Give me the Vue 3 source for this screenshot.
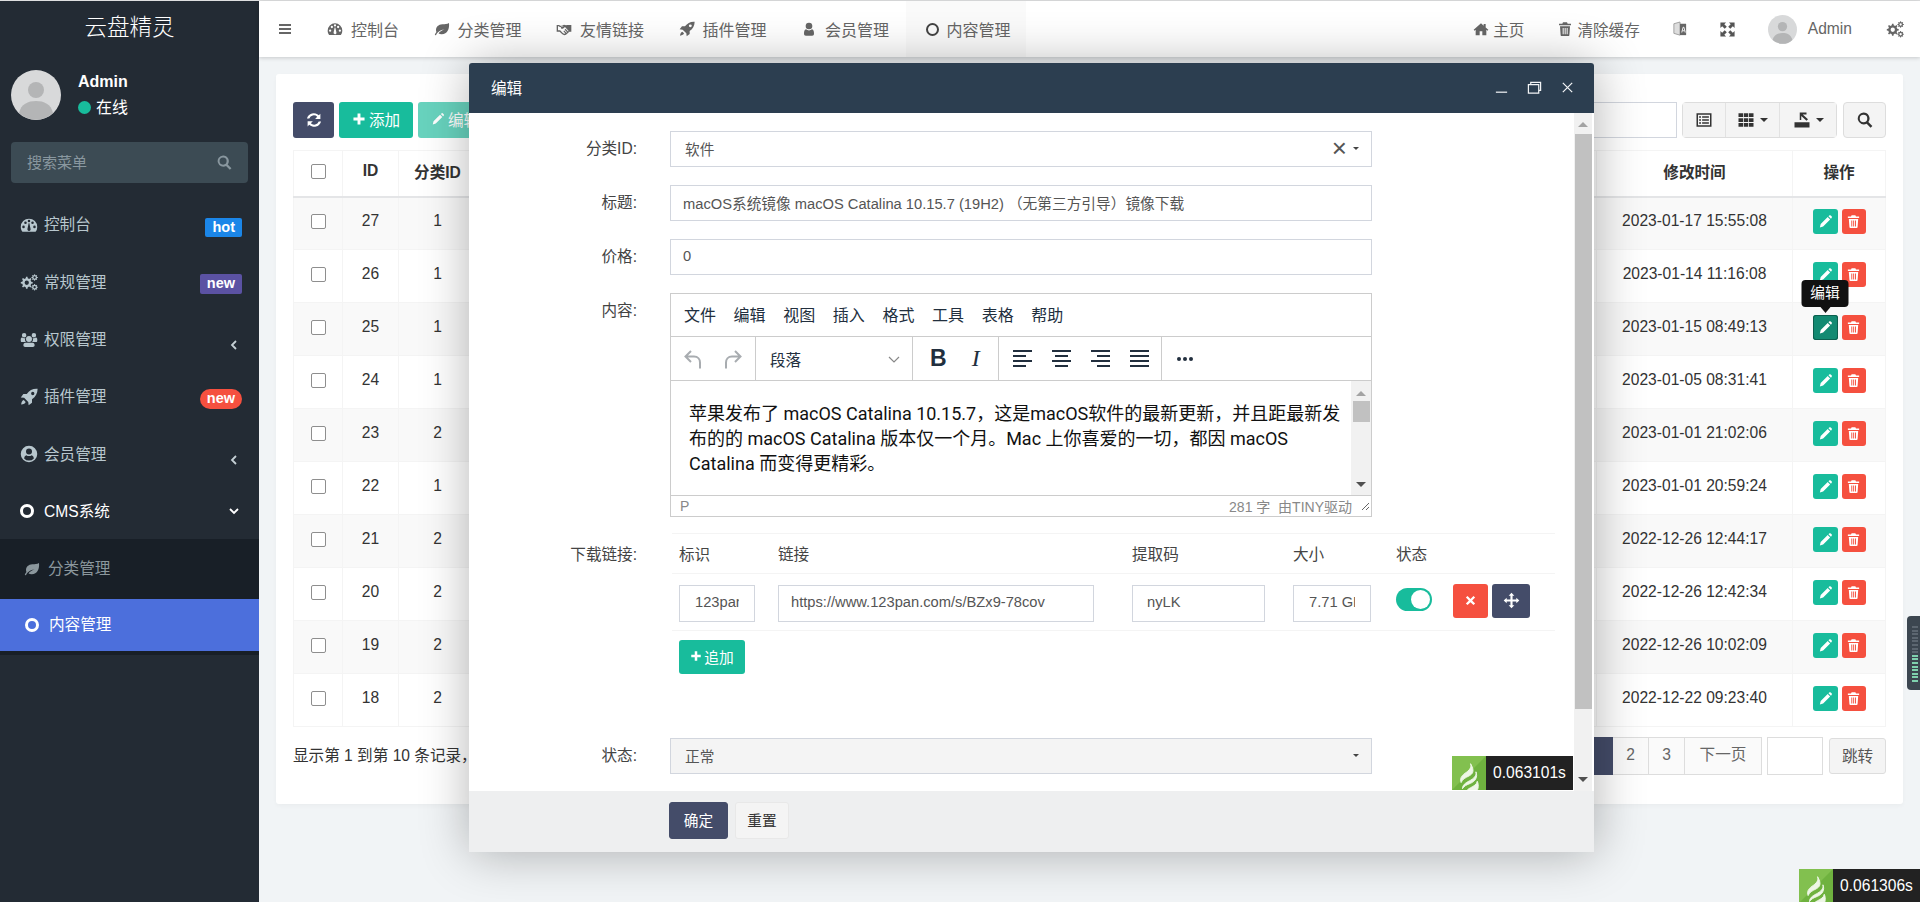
<script setup>
// generated outline of a gear, used for the settings icons
function gear(cx, cy, r, teeth) {
  const pts = []
  const step = (Math.PI * 2) / teeth
  for (let i = 0; i < teeth; i++) {
    const a = i * step
    const list = [[a - step * 0.28, r * 0.76], [a - step * 0.16, r], [a + step * 0.16, r], [a + step * 0.28, r * 0.76]]
    for (const [t, d] of list) pts.push(`${(cx + Math.cos(t) * d).toFixed(2)} ${(cy + Math.sin(t) * d).toFixed(2)}`)
  }
  const hole = r * 0.36
  return `M${pts.join('L')}zM${cx - hole} ${cy}a${hole} ${hole} 0 1 0 ${hole * 2} 0a${hole} ${hole} 0 1 0 ${-hole * 2} 0z`
}

const icons = {
  bars: 'M3 4.5h18v3H3zM3 10.5h18v3H3zM3 16.5h18v3H3z',
  gauge: 'M12 3.5A11 11 0 0 0 1 14.5c0 2.5.8 4.6 2.2 6.5h17.6a10.8 10.8 0 0 0 2.2-6.5 11 11 0 0 0-11-11zM4.7 16.2a1.7 1.7 0 1 1 0-3.4 1.7 1.7 0 0 1 0 3.4zm2.6-5.5a1.7 1.7 0 1 1 0-3.4 1.7 1.7 0 0 1 0 3.4zM12 8.4a1.7 1.7 0 1 1 0-3.4 1.7 1.7 0 0 1 0 3.4zm1.8 10.6a2.2 2.2 0 0 1-3.9-1.8l1.6-7.5h1l1.6 7.5c.1.6 0 1.3-.3 1.8zm2.9-8.3a1.7 1.7 0 1 1 0-3.4 1.7 1.7 0 0 1 0 3.4zm2.6 5.5a1.7 1.7 0 1 1 0-3.4 1.7 1.7 0 0 1 0 3.4z',
  leaf: 'M22.5 3c-3 2-6 1.600-10 1.900C6.500 5.400 3 9 3 13.500c0 1.100.2 2.100.6 3.100C2.400 18 1.500 19.600 1.200 21l1.800.5c.4-1.400 1.400-3 3-4.500 2.500-2.300 6-4 10-4.600-3.700 1.300-7 3.400-9.300 6.100 1.300 1 3 1.500 5 1.400C20 19.600 23.500 12 22.500 3z',
  rocket: 'M23 1c-6-.3-10.500 2-14 7H4.500L1 12.500l4.500.5L11 18.500l.5 4.500 4.500-3.500V15c5-3.500 7.300-8 7.500-14zM17 9.500a2.200 2.200 0 1 1 0-4.400 2.200 2.200 0 0 1 0 4.400zM5 16c-2 .5-3 2.500-3.500 6 3.500-.5 5.500-1.500 6-3.500z',
  user: 'M12 2.500a5 5 0 1 1 0 10 5 5 0 0 1 0-10zM7.500 12.500c1.200 1 2.800 1.600 4.500 1.600s3.300-.6 4.500-1.600c2.300.5 3 3.500 3 6.500 0 1.800-1 3-2.800 3H7.300c-1.800 0-2.800-1.200-2.800-3 0-3 .7-6 3-6.500z',
  userCircle: 'M12 1a11 11 0 1 0 0 22 11 11 0 0 0 0-22zm0 3.600a4 4 0 1 1 0 8 4 4 0 0 1 0-8zm0 16.200a8.800 8.800 0 0 1-6.500-2.900c.4-2.100 1.300-4 3-4.300 1 .8 2.200 1.200 3.500 1.200s2.500-.4 3.500-1.200c1.700.3 2.600 2.200 3 4.300a8.800 8.800 0 0 1-6.500 2.900z',
  users: 'M12 8a4 4 0 1 1 0 8 4 4 0 0 1 0-8zM5.500 4a3 3 0 1 1 0 6 3 3 0 0 1 0-6zm13 0a3 3 0 1 1 0 6 3 3 0 0 1 0-6zM1 12c0-1.200 1-2 2-2 .7.600 1.500 1 2.500 1 .6 0 1.200-.1 1.600-.4a5 5 0 0 0 .7 5.400H2.500C1.500 16 1 15.300 1 14.200zm22 0v2.200c0 1.100-.5 1.800-1.500 1.800h-5.300a5 5 0 0 0 .7-5.400c.4.300 1 .4 1.600.4 1 0 1.800-.4 2.500-1 1 0 2 .8 2 2zM7 17h10c1.500 0 2.500 1.200 2.500 3.200 0 1.500-1 2.300-2.300 2.300H6.800c-1.300 0-2.300-.8-2.300-2.300C4.500 18.200 5.500 17 7 17z',
  home: 'M12 3.500 1 13.200l1.200 1.300L4 13v8.500h6V15.500h4v6h6V13l1.800 1.500 1.200-1.300-4-3.500V4.500h-3V7z',
  trash: 'M9 2h6l1 2h5v2.500H3V4h5zM4.500 8h15l-1 13.200c-.1.800-.7 1.300-1.500 1.300H7c-.8 0-1.400-.5-1.500-1.300zM8.500 10.500v9.500h1.500v-9.500zm3 0v9.500H13v-9.500zm3 0v9.500H16v-9.500z',
  expand: 'M2 2h8L7.500 4.500 11 8 8 11 4.500 7.500 2 10zM22 2v8l-2.500-2.500L16 11l-3-3 3.500-3.500L14 2zM2 22v-8l2.500 2.500L8 13l3 3-3.500 3.500L10 22zM22 22h-8l2.500-2.500L13 16l3-3 3.500 3.500L22 14z',
  pencil: 'M3 21.500 4.300 16 15.500 4.800l3.900 3.900L8.200 19.900zM16.800 3.500l1-1a1.900 1.900 0 0 1 2.700 0l1.200 1.200a1.900 1.900 0 0 1 0 2.700l-1 1z',
  plus: 'M9.500 2.500h5v7h7v5h-7v7h-5v-7h-7v-5h7z',
  times: 'M6.500 3.500 12 9l5.500-5.500 3 3L15 12l5.500 5.500-3 3L12 15l-5.500 5.500-3-3L9 12 3.500 6.500z',
  search: 'M10 2a8 8 0 0 1 6.500 12.700l5.300 5.300-2.300 2.300-5.300-5.300A8 8 0 1 1 10 2zm0 3a5 5 0 1 0 0 10 5 5 0 0 0 0-10z',
  move: 'M12 1l4 4.200h-2.500v5.300h5.300V8L23 12l-4.200 4v-2.500h-5.300v5.300H16L12 23l-4-4.200h2.500v-5.300H5.200V16L1 12l4.200-4v2.500h5.300V5.200H8z',
  refresh: 'M20.500 3.500v7h-7l2.800-2.800A6.500 6.500 0 0 0 5.700 10H2.600A9.500 9.500 0 0 1 18.400 5.600zM3.500 20.500v-7h7l-2.800 2.800A6.500 6.500 0 0 0 18.300 14h3.100A9.500 9.500 0 0 1 5.600 18.400z',
  listAlt: 'M2 3h20v18H2zm2 2v14h16V5zm1.500 2h2.500v2H5.500zm4 0h9v2h-9zm-4 4h2.500v2H5.500zm4 0h9v2h-9zm-4 4h2.500v2H5.500zm4 0h9v2h-9z',
  th: 'M2 3h6v5H2zM9 3h6v5H9zM16 3h6v5h-6zM2 9.500h6v5H2zM9 9.500h6v5H9zM16 9.500h6v5h-6zM2 16h6v5H2zM9 16h6v5H9zM16 16h6v5h-6z',
  exportIcon: 'M2 15h20v7H2zM9 2h9v2.500h-5L20 11l-2 2-7-6.500V12H9z',
  flame: 'M13 2c1 3-1 5-4 7-3 2.200-4 4-3 7 1-2.500 3-3.500 6-5 3-1.600 4-4 1-9zM17 8c.5 3-1.500 5-5 6.800-3 1.500-5 3.200-5 5.700 1.200-2 3-2.800 6-4 3.500-1.500 5.500-4.500 4-8.500zM18 15c-.5 2.500-2.500 3.500-5 4.800-2 1-3.200 2-3.700 4.200h7.200c2-2.200 3-5.500 1.500-9z',
  handshake: 'M1 6h4l1 1h3l3-1.500 3 1 2-.5h6v10h-3l-5 4.500-2.500 1-3-1.500-4-4H1zm2 2v6h3.200l4.300 4.300 2 1 1.600-.6-3-3.200 1.200-1.200 3.300 3.400 1-.9-3.600-3.800 1.200-1.200 3.800 4 1-.9-5.500-6-2.700 2.200c-1 .8-2.300.8-3 0-.8-.8-.7-2 .2-2.800L12 8.400 9.500 9H5.300L4.500 8z'
}
const gears = gear(9, 13, 8, 8) + gear(19.500, 6, 4.300, 8) + gear(19.500, 19, 4.300, 8)

const nav = [
  { text: '控制台', icon: 'gauge', badge: 'hot', cls: 'is-hot' },
  { text: '常规管理', icon: 'gears', badge: 'new', cls: 'is-new' },
  { text: '权限管理', icon: 'users', arrow: true },
  { text: '插件管理', icon: 'rocket', badge: 'new', cls: 'is-pill' },
  { text: '会员管理', icon: 'userCircle', arrow: true }
]

const topLinks = [
  { text: '控制台', icon: 'gauge' },
  { text: '分类管理', icon: 'leaf' },
  { text: '友情链接', icon: 'handshake' },
  { text: '插件管理', icon: 'rocket' },
  { text: '会员管理', icon: 'user' }
]

const rows = [
  { id: 27, cat: 1, time: '2023-01-17 15:55:08' },
  { id: 26, cat: 1, time: '2023-01-14 11:16:08' },
  { id: 25, cat: 1, time: '2023-01-15 08:49:13', hover: true },
  { id: 24, cat: 1, time: '2023-01-05 08:31:41' },
  { id: 23, cat: 2, time: '2023-01-01 21:02:06' },
  { id: 22, cat: 1, time: '2023-01-01 20:59:24' },
  { id: 21, cat: 2, time: '2022-12-26 12:44:17' },
  { id: 20, cat: 2, time: '2022-12-26 12:42:34' },
  { id: 19, cat: 2, time: '2022-12-26 10:02:09' },
  { id: 18, cat: 2, time: '2022-12-22 09:23:40' }
]

const menus = ['文件', '编辑', '视图', '插入', '格式', '工具', '表格', '帮助']
</script>

<template>
  <div class="page">
    <aside class="sidebar">
      <div class="logo">云盘精灵</div>
      <div class="user-panel">
        <svg class="avatar" viewBox="0 0 50 50">
          <circle cx="25" cy="25" r="25" fill="#d8d9da" />
          <circle cx="25" cy="20" r="8" fill="#b4b5b6" />
          <path d="M8 43c2-9 9-12 17-12s15 3 17 12a25 25 0 0 1-34 0z" fill="#b4b5b6" />
        </svg>
        <div class="user-info">
          <div class="user-name">Admin</div>
          <div class="user-state"><i class="dot"></i>在线</div>
        </div>
      </div>
      <div class="side-search">
        <span>搜索菜单</span>
        <svg viewBox="0 0 24 24"><path fill-rule="evenodd" :d="icons.search" /></svg>
      </div>
      <ul class="nav">
        <li v-for="item in nav" :key="item.text" class="nav-item">
          <svg class="nav-icon" viewBox="0 0 24 24"><path fill-rule="evenodd" :d="item.icon === 'gears' ? gears : icons[item.icon]" /></svg>
          <span class="nav-text">{{ item.text }}</span>
          <span v-if="item.badge" class="nav-badge" :class="item.cls">{{ item.badge }}</span>
          <svg v-if="item.arrow" class="chev" viewBox="0 0 12 12"><path d="M8 2 4 6l4 4" /></svg>
        </li>
        <li class="nav-item is-open">
          <i class="ring"></i>
          <span class="nav-text">CMS系统</span>
          <svg class="chev" viewBox="0 0 12 12"><path d="M2 4l4 4 4-4" /></svg>
        </li>
        <li class="sub-wrap">
          <div class="sub-item">
            <svg class="nav-icon" viewBox="0 0 24 24"><path :d="icons.leaf" /></svg>
            <span>分类管理</span>
          </div>
          <div class="sub-item is-active">
            <i class="ring"></i>
            <span>内容管理</span>
          </div>
        </li>
      </ul>
    </aside>

    <div class="main">
      <header class="topbar">
        <svg class="top-bars" viewBox="0 0 24 24"><path :d="icons.bars" /></svg>
        <a v-for="link in topLinks" :key="link.text" class="top-link">
          <svg viewBox="0 0 24 24"><path fill-rule="evenodd" :d="icons[link.icon]" /></svg>{{ link.text }}
        </a>
        <a class="top-link is-active"><i class="ring"></i>内容管理</a>
        <div class="top-right">
          <a class="top-link"><svg viewBox="0 0 24 24"><path :d="icons.home" /></svg>主页</a>
          <a class="top-link"><svg viewBox="0 0 24 24"><path fill-rule="evenodd" :d="icons.trash" /></svg>清除缓存</a>
          <svg class="lang" viewBox="0 0 16 18">
            <path d="M1 3l7-2v15l-7-2z" fill="#ddd" stroke="#999" />
            <path d="M8 3h7v13H8z" fill="#666" />
            <path d="M10 13l1.500-6h1l1.500 6M10.800 11h2.400" stroke="#fff" fill="none" />
          </svg>
          <svg class="top-expand" viewBox="0 0 24 24"><path :d="icons.expand" /></svg>
          <svg class="top-avatar" viewBox="0 0 50 50">
            <circle cx="25" cy="25" r="25" fill="#d8d9da" />
            <circle cx="25" cy="20" r="8" fill="#b4b5b6" />
            <path d="M8 43c2-9 9-12 17-12s15 3 17 12a25 25 0 0 1-34 0z" fill="#b4b5b6" />
          </svg>
          <span class="top-admin">Admin</span>
          <svg class="top-gears" viewBox="0 0 24 24"><path fill-rule="evenodd" :d="gears" /></svg>
        </div>
      </header>

      <section class="content">
        <div class="panel">
          <div class="toolbar">
            <button class="btn btn-dark btn-refresh"><svg viewBox="0 0 24 24"><path :d="icons.refresh" /></svg></button>
            <button class="btn btn-green"><svg viewBox="0 0 24 24"><path :d="icons.plus" /></svg>添加</button>
            <button class="btn btn-green is-off"><svg viewBox="0 0 24 24"><path :d="icons.pencil" /></svg>编辑</button>
            <div class="tool-right">
              <input class="table-search" />
              <div class="btn-group">
                <button class="tool-btn w43"><svg viewBox="0 0 24 24"><path fill-rule="evenodd" :d="icons.listAlt" /></svg></button>
                <button class="tool-btn w54"><svg viewBox="0 0 24 24"><path :d="icons.th" /></svg><i class="caret"></i></button>
                <button class="tool-btn w56"><svg viewBox="0 0 24 24"><path :d="icons.exportIcon" /></svg><i class="caret"></i></button>
              </div>
              <button class="tool-btn tool-single"><svg viewBox="0 0 24 24"><path fill-rule="evenodd" :d="icons.search" /></svg></button>
            </div>
          </div>

          <table class="grid">
            <colgroup>
              <col style="width: 49px" /><col style="width: 56px" /><col style="width: 78px" /><col />
              <col style="width: 196px" /><col style="width: 93px" />
            </colgroup>
            <thead>
              <tr>
                <th><i class="check"></i></th>
                <th>ID</th>
                <th>分类ID</th>
                <th></th>
                <th>修改时间</th>
                <th>操作</th>
              </tr>
            </thead>
            <tbody>
              <tr v-for="row in rows" :key="row.id">
                <td><i class="check"></i></td>
                <td>{{ row.id }}</td>
                <td>{{ row.cat }}</td>
                <td></td>
                <td>{{ row.time }}</td>
                <td class="ops">
                  <button class="op op-edit" :class="{ 'is-hover': row.hover }">
                    <svg viewBox="0 0 24 24"><path :d="icons.pencil" /></svg>
                    <span v-if="row.hover" class="tip">编辑</span>
                  </button>
                  <button class="op op-del"><svg viewBox="0 0 24 24"><path fill-rule="evenodd" :d="icons.trash" /></svg></button>
                </td>
              </tr>
            </tbody>
          </table>

          <div class="pager-row">
            <span class="pager-info">显示第 1 到第 10 条记录，</span>
            <div class="pager">
              <a class="page-cell is-current">1</a>
              <a class="page-cell w36">2</a>
              <a class="page-cell w36">3</a>
              <a class="page-cell w77">下一页</a>
              <input class="page-jump" />
              <button class="page-go">跳转</button>
            </div>
          </div>
        </div>
      </section>
    </div>

    <div class="modal">
      <div class="modal-head">
        <span>编辑</span>
        <div class="modal-ctrl">
          <svg viewBox="0 0 16 16"><path d="M2 13h12" /></svg>
          <svg viewBox="0 0 16 16"><path d="M1.500 5h11v9h-11zM4 5V2.500h10.500V11h-2" /></svg>
          <svg viewBox="0 0 16 16"><path d="M3 3l10 10M13 3 3 13" /></svg>
        </div>
      </div>

      <div class="modal-body">
        <form class="form" @submit.prevent>
          <div class="form-row">
            <label>分类ID:</label>
            <div class="select">
              <span>软件</span>
              <b class="select-x">×</b>
              <i class="caret"></i>
            </div>
          </div>
          <div class="form-row">
            <label>标题:</label>
            <input class="field" value="macOS系统镜像 macOS Catalina 10.15.7 (19H2) （无第三方引导）镜像下载" />
          </div>
          <div class="form-row">
            <label>价格:</label>
            <input class="field" value="0" />
          </div>
          <div class="form-row row-editor">
            <label>内容:</label>
            <div class="editor">
              <div class="ed-menu"><span v-for="m in menus" :key="m">{{ m }}</span></div>
              <div class="ed-tools">
                <div class="ed-group g-undo">
                  <svg viewBox="0 0 20 24"><path d="M8 4 2.500 9.500 8 15M3 9.500h8c4 0 6 3 6 6v6" /></svg>
                  <svg viewBox="0 0 20 24"><path d="M12 4l5.500 5.500L12 15M17 9.500H9c-4 0-6 3-6 6v6" /></svg>
                </div>
                <div class="ed-group g-format">
                  <span>段落</span>
                  <svg viewBox="0 0 12 12"><path d="M1 4l5 5 5-5" /></svg>
                </div>
                <div class="ed-group g-style"><b>B</b><em>I</em></div>
                <div class="ed-group g-align">
                  <i class="al al-left"><u></u><u></u><u></u><u></u></i>
                  <i class="al al-center"><u></u><u></u><u></u><u></u></i>
                  <i class="al al-right"><u></u><u></u><u></u><u></u></i>
                  <i class="al al-full"><u></u><u></u><u></u><u></u></i>
                </div>
                <div class="ed-group g-more"><i></i><i></i><i></i></div>
              </div>
              <div class="ed-content">
                <p>苹果发布了 macOS Catalina 10.15.7，这是macOS软件的最新更新，并且距最新发<br />布的的 macOS Catalina 版本仅一个月。Mac 上你喜爱的一切，都因 macOS<br />Catalina 而变得更精彩。</p>
                <div class="ed-scroll">
                  <i class="arrow-up"></i>
                  <div class="ed-thumb"></div>
                  <i class="arrow-down"></i>
                </div>
              </div>
              <div class="ed-status">
                <span>P</span>
                <span class="ed-count">281 字 &nbsp;由TINY驱动</span>
                <svg viewBox="0 0 10 10"><path d="M9 2 2 9M9 6 6 9" /></svg>
              </div>
            </div>
          </div>

          <div class="links">
            <label>下载链接:</label>
            <div class="links-table">
              <div class="links-head">
                <span>标识</span><span>链接</span><span>提取码</span><span>大小</span><span>状态</span><span></span>
              </div>
              <div class="links-row">
                <input class="field w76" value="123pan" />
                <input class="field w316" value="https://www.123pan.com/s/BZx9-78cov" />
                <input class="field w133" value="nyLK" />
                <input class="field w78" value="7.71 GB" />
                <span class="toggle"></span>
                <span class="link-ops">
                  <button class="link-btn is-red"><svg viewBox="0 0 24 24"><path :d="icons.times" /></svg></button>
                  <button class="link-btn is-dark"><svg viewBox="0 0 24 24"><path :d="icons.move" /></svg></button>
                </span>
              </div>
              <button class="btn btn-green add-link"><svg viewBox="0 0 24 24"><path :d="icons.plus" /></svg>追加</button>
            </div>
          </div>

          <div class="form-row row-state">
            <label>状态:</label>
            <div class="select is-gray">
              <span>正常</span>
              <i class="caret"></i>
            </div>
          </div>
        </form>

        <div class="scrollbar">
          <i class="arrow-up"></i>
          <div class="thumb"></div>
          <i class="arrow-down"></i>
        </div>
      </div>

      <div class="modal-foot">
        <button class="foot-btn is-ok">确定</button>
        <button class="foot-btn">重置</button>
      </div>

      <div class="trace in-modal">
        <svg viewBox="0 0 34 34"><rect width="34" height="34" fill="#6fb23f" /><path d="M0 0h34L0 34z" fill="#82c04f" /><path :d="icons.flame" fill="#eef6e6" stroke="#eef6e6" stroke-width=".7" transform="translate(1 5) scale(1.35)" /></svg>
        <span>0.063101s</span>
      </div>
    </div>

    <div class="trace in-page">
      <svg viewBox="0 0 34 34"><rect width="34" height="34" fill="#6fb23f" /><path d="M0 0h34L0 34z" fill="#82c04f" /><path :d="icons.flame" fill="#eef6e6" stroke="#eef6e6" stroke-width=".7" transform="translate(1 5) scale(1.35)" /></svg>
      <span>0.061306s</span>
    </div>

    <div class="side-widget"><i v-for="n in 16" :key="n" :class="{ lit: n > 8 }"></i></div>
  </div>
</template>

<style>
html, body { margin: 0; background: #f1f4f6; }
</style>

<style scoped>
.page {
  position: relative; width: 1920px; height: 902px; overflow: hidden;
  padding-top: 1px; box-sizing: border-box;
  background: #dedfe0;
  display: flex;
  font-family: "Liberation Sans", "Noto Sans CJK SC", sans-serif;
  font-size: 15.6px; color: #333;
}
svg { fill: currentColor; display: block; flex-shrink: 0; }
button { font-family: inherit; padding: 0; border: 0; cursor: pointer; }
input { font-family: inherit; outline: 0; box-sizing: border-box; }
i { display: block; }

/* Sidebar */
.sidebar { width: 259px; flex-shrink: 0; background: #232b34; color: #b8c7ce; }
.logo { height: 56px; line-height: 54px; text-align: center; font-size: 22.5px; color: #fff; font-weight: 300; }
.user-panel { display: flex; align-items: center; gap: 17px; padding: 12px 11px 0; height: 51px; }
.avatar { width: 50px; height: 50px; }
.user-name { font-weight: 700; color: #fff; font-size: 16px; line-height: 26px; }
.user-state { display: flex; align-items: center; gap: 5px; color: #fff; font-size: 16px; line-height: 26px; }
.dot { width: 13px; height: 13px; border-radius: 50%; background: #18bc9c; }
.side-search {
  margin: 22px 11px 0; height: 41px; border-radius: 4px; background: #3c4b54;
  display: flex; align-items: center; justify-content: space-between; padding: 0 15px 0 16px;
  color: #89979f; font-size: 15px;
}
.side-search span { padding-bottom: 3px; }
.side-search svg { width: 17px; height: 17px; }
.nav { list-style: none; margin: 13px 0 0; padding: 0; }
.nav-item { position: relative; height: 57.4px; display: flex; align-items: center; padding-left: 20px; font-size: 15.6px; }
.nav-icon { width: 18px; height: 18px; margin-right: 6px; }
.nav-text { padding-bottom: 3px; }
.nav-badge { position: absolute; right: 17px; top: 22px; padding: 0 7px; height: 19px; line-height: 18px; font-size: 14.5px; font-weight: 700; color: #fff; border-radius: 2px; }
.is-hot { background: #1b86e8; }
.is-new { background: #5b52a3; top: 21px; height: 20px; }
.is-pill { background: #f5503f; border-radius: 10px; top: 21px; height: 20px; }
.chev { position: absolute; right: 19px; top: 28px; width: 12px; height: 12px; fill: none; stroke: #c5d0d5; stroke-width: 1.8; }
.is-open { color: #fff; height: 57px; }
.is-open .ring { margin-right: 10px; }
.is-open .chev { stroke: #fff; top: 22px; }
.ring { width: 14px; height: 14px; border: 3px solid currentColor; border-radius: 50%; box-sizing: border-box; flex-shrink: 0; }
.sub-wrap { background: #181f27; padding-bottom: 4px; margin-top: -1px; }
.sub-item { height: 60px; display: flex; align-items: center; padding-left: 24px; color: #8b979d; }
.sub-item span { padding-bottom: 4px; }
.sub-item .nav-icon { width: 16px; height: 16px; margin-right: 8px; }
.sub-item.is-active { height: 52px; background: #4c6fdc; color: #fff; padding-left: 25px; }
.sub-item .ring { width: 14px; height: 14px; margin-right: 10px; }

/* Top bar */
.main { flex: 1; min-width: 0; display: flex; flex-direction: column; background: #f1f4f6; }
.topbar {
  height: 56px; flex-shrink: 0; background: #fff; display: flex; align-items: center;
  padding-left: 18px; color: #666; font-size: 16px;
  box-shadow: 0 1px 4px rgba(0, 0, 0, .18); position: relative;
}
.top-bars { width: 16px; height: 16px; margin-right: 34px; }
.top-link { display: flex; align-items: center; gap: 8px; margin-right: 34.5px; }
.top-link svg { width: 16px; height: 16px; }
.topbar > .top-link.is-active { background: #fafafa; height: 56px; margin: 0 0 0 -18px; padding: 0 15px 0 20px; gap: 8px; }
.topbar > .top-link .ring { border-width: 2px; width: 13px; height: 13px; color: #444; }
.top-right { margin-left: auto; display: flex; align-items: center; padding-right: 16px; font-size: 15.6px; }
.top-right .top-link { margin-right: 33px; gap: 4px; }
.top-right .top-link svg { width: 16px; height: 16px; }
.lang { width: 14px; height: 16px; margin-right: 32px; }
.top-expand { width: 17px; height: 17px; margin-right: 32px; color: #555; }
.top-avatar { width: 29px; height: 29px; margin-right: 11px; }
.top-admin { margin-right: 34px; font-size: 15.6px; }
.top-gears { width: 18px; height: 18px; color: #666; }

/* Panel and table */
.content { padding: 17px; flex: 1; min-height: 0; }
.panel {
  background: #fff; border-radius: 3px; padding: 28px 17px 0; height: 730px; box-sizing: border-box;
  box-shadow: 0 2px 4px rgba(0, 0, 0, .03);
}
.toolbar { display: flex; align-items: center; gap: 5px; height: 36px; margin-bottom: 12px; }
.btn {
  height: 36px; border-radius: 3px; color: #fff; display: inline-flex; align-items: center; justify-content: center; gap: 3px;
  font-size: 15.6px; padding-bottom: 2px; box-sizing: border-box;
}
.btn svg { width: 14px; height: 14px; }
.btn-dark { background: #444c69; width: 41px; padding: 0; }
.btn-refresh svg { width: 18px; height: 18px; }
.btn-green { background: #18bc9c; width: 74px; }
.is-off { opacity: .65; }
.tool-right { margin-left: auto; display: flex; align-items: center; }
.table-search { width: 180px; height: 36px; border: 1px solid #d2d6de; margin-right: 5px; }
.btn-group { display: flex; border: 1px solid #ddd; border-radius: 4px; background: #f4f4f4; margin-right: 6px; }
.tool-btn {
  height: 34px; background: #f4f4f4; color: #333; display: flex; align-items: center; justify-content: center; gap: 5px;
}
.tool-btn svg { width: 18px; height: 18px; }
.w43 { width: 43px; border-right: 1px solid #e2e2e2; }
.w54 { width: 54px; border-right: 1px solid #e2e2e2; }
.w56 { width: 56px; }
.tool-single { width: 43px; height: 36px; border: 1px solid #ddd; border-radius: 4px; }
.caret { width: 0; height: 0; border: 4px solid transparent; border-top-color: currentColor; border-bottom: 0; }

.grid { width: 100%; table-layout: fixed; border-collapse: collapse; border: 1px solid #f4f4f4; }
.grid th { height: 46px; font-size: 15.6px; font-weight: 700; color: #333; text-align: center; border-bottom: 2px solid #e4e5e7; border-right: 1px solid #f4f4f4; padding: 0 0 4px; box-sizing: border-box; }
.grid td { height: 53px; text-align: center; padding: 0 0 4px; border-right: 1px solid #f4f4f4; border-bottom: 1px solid #f4f4f4; box-sizing: border-box; color: #333; }
.grid tbody tr:nth-child(odd) { background: #f9f9f9; }
.check { width: 13px; height: 13px; border: 1px solid #8e8e8e; border-radius: 2px; background: #fff; margin: 0 auto; }
.ops { position: relative; font-size: 0; }
.op { position: relative; width: 25px; height: 25px; border-radius: 3px; color: #fff; display: inline-flex; align-items: center; justify-content: center; vertical-align: middle; }
.op svg { width: 15px; height: 15px; }
.op-edit { background: #18bc9c; margin-right: 4px; }
.op-del { background: #f5503f; width: 24px; }
.op-edit.is-hover { background: #138a72; box-shadow: inset 0 0 0 1px #0c5f4e; }
.tip {
  position: absolute; left: 50%; bottom: 33px; transform: translateX(-50%);
  background: #111; color: #fff; font-size: 14.7px; line-height: 27px; width: 47px; border-radius: 4px;
}
.tip::after { content: ""; position: absolute; left: 50%; top: 100%; margin-left: -5px; border: 6px solid transparent; border-left-width: 5px; border-right-width: 5px; border-top-color: #111; border-bottom: 0; }

.pager-row { display: flex; justify-content: space-between; align-items: center; margin-top: 10px; height: 38px; }
.pager-info { padding-bottom: 5px; }
.pager { display: flex; align-items: center; }
.page-cell { height: 38px; line-height: 34px; box-sizing: border-box; border: 1px solid #ddd; border-left: 0; text-align: center; color: #666; background: #fafafa; }
.page-cell.is-current { width: 50px; background: #444c69; color: #fff; border-color: #444c69; }
.w36 { width: 36px; }
.w77 { width: 77px; }
.page-jump { width: 56px; height: 38px; border: 1px solid #ddd; margin: 0 6px 0 5px; }
.page-go { width: 57px; height: 36px; border: 1px solid #ddd; border-radius: 3px; background: #f4f4f4; color: #555; font-size: 15.6px; padding-bottom: 3px; }

/* Modal window */
.modal {
  position: absolute; left: 469px; top: 63px; width: 1125px; height: 789px;
  display: flex; flex-direction: column; background: #fff; border-radius: 3px 3px 0 0;
  box-shadow: 1px 1px 50px rgba(0, 0, 0, .3);
}
.modal-head {
  height: 50px; flex-shrink: 0; background: #2c3e50; color: #fff; border-radius: 3px 3px 0 0;
  display: flex; align-items: center; justify-content: space-between; padding: 0 19px 2px 22px; font-size: 15.6px; box-sizing: border-box;
}
.modal-ctrl { display: flex; gap: 18px; }
.modal-ctrl svg { width: 15px; height: 15px; fill: none; stroke: #f2f4f6; stroke-width: 1.3; }
.modal-body { flex: 1; min-height: 0; display: flex; overflow: hidden; padding-right: 2px; }
.form { flex: 1; min-width: 0; padding-top: 18px; font-size: 14.7px; color: #555; }
.form-row { display: flex; margin-bottom: 18px; }
.form-row label { width: 168px; text-align: right; margin-right: 33px; line-height: 36px; color: #444; flex-shrink: 0; font-size: 15.6px; }
.field { height: 36px; border: 1px solid #d2d6de; padding: 0 12px 2px; font-size: 14.7px; color: #555; background: #fff; }
.form-row > .field { width: 702px; }
.select { width: 702px; height: 36px; box-sizing: border-box; border: 1px solid #d2d6de; display: flex; align-items: center; padding: 0 12px 2px 14px; color: #555; }
.select span { flex: 1; }
.select-x { font-weight: 400; font-size: 26px; color: #555; margin-right: 6px; line-height: 1; }
.select .caret { border-width: 3.5px; color: #444; border-bottom: 0; }
.is-gray { background: #f4f4f4; }
.row-editor { margin-bottom: 16px; }
.row-editor label { line-height: 36px; }

.editor { width: 702px; height: 224px; box-sizing: border-box; border: 1px solid #ccc; display: flex; flex-direction: column; color: #222f3e; }
.ed-menu { height: 43px; flex-shrink: 0; display: flex; align-items: center; gap: 17.6px; padding: 0 0 2px 13px; font-size: 16px; border-bottom: 1px solid #ccc; box-sizing: border-box; }
.ed-tools { height: 44px; flex-shrink: 0; display: flex; border-bottom: 1px solid #ccc; box-sizing: border-box; }
.ed-group { display: flex; align-items: center; border-right: 1px solid #ccc; }
.g-undo { width: 85px; padding-left: 12px; box-sizing: border-box; gap: 20px; }
.g-undo svg { width: 20px; height: 24px; fill: none; stroke: #a8acb0; stroke-width: 2; }
.g-format { width: 157px; padding: 0 12px 0 14px; box-sizing: border-box; justify-content: space-between; font-size: 15.6px; }
.g-format svg { width: 12px; height: 12px; fill: none; stroke: #888; stroke-width: 1.2; }
.g-style { width: 86px; box-sizing: border-box; padding-left: 17px; gap: 25px; font-size: 23px; }
.g-style b { font-family: "Liberation Sans", sans-serif; }
.g-style em { font-family: "Liberation Serif", serif; font-size: 24px; }
.g-align { width: 163px; box-sizing: border-box; padding-left: 14px; gap: 20px; }
.al { width: 19px; display: flex; flex-direction: column; gap: 3px; }
.al u { display: block; height: 2px; background: #222f3e; width: 100%; }
.al-left u:nth-child(even) { width: 70%; }
.al-center { align-items: center; }
.al-center u:nth-child(even) { width: 70%; }
.al-right { align-items: flex-end; }
.al-right u:nth-child(even) { width: 70%; }
.g-more { border: 0; padding-left: 15px; gap: 2px; }
.g-more i { width: 4px; height: 4px; border-radius: 50%; background: #222f3e; }
.ed-content { flex: 1; min-height: 0; position: relative; display: flex; }
.ed-content p { flex: 1; margin: 0; padding: 20px 0 0 18px; font-size: 18px; line-height: 25px; color: #111; white-space: nowrap; overflow: hidden; font-family: Roboto, "Noto Sans CJK SC", sans-serif; }
.ed-scroll { width: 20px; flex-shrink: 0; background: #f1f1f1; display: flex; flex-direction: column; align-items: center; padding: 10px 0 8px; box-sizing: border-box; }
.ed-thumb { width: 17px; height: 21px; background: #c1c1c1; margin: 5px 0 auto; }
.ed-status { height: 21px; flex-shrink: 0; border-top: 1px solid #ccc; display: flex; align-items: center; padding: 0 1px 0 9px; font-size: 14px; color: #888; box-sizing: border-box; }
.ed-count { margin-left: auto; margin-right: 8px; }
.ed-status svg { width: 10px; height: 10px; fill: none; stroke: #666; }

.arrow-up { width: 0; height: 0; border: 5px solid transparent; border-bottom-color: #a3a3a3; border-top: 0; }
.arrow-down { width: 0; height: 0; border: 5px solid transparent; border-top-color: #505050; border-bottom: 0; }

.links { display: flex; }
.links > label { width: 168px; text-align: right; margin-right: 35px; padding-top: 13px; line-height: 17px; color: #444; font-size: 15.6px; flex-shrink: 0; }
.links-table { width: 883px; flex-shrink: 0; }
.links-head {
  height: 41px; display: grid; grid-template-columns: 99px 354px 161px 103px 57px 1fr;
  align-items: center; padding: 0 0 2px 7px; border-top: 1px solid #f4f4f4; border-bottom: 1px solid #f4f4f4; box-sizing: border-box; color: #444; font-size: 15.6px;
}
.links-row {
  height: 57px; display: grid; grid-template-columns: 99px 354px 161px 103px 57px 1fr;
  align-items: center; padding-left: 7px; border-bottom: 1px solid #f4f4f4; box-sizing: border-box;
}
.links-row .field { padding: 0 15px 2px; height: 37px; margin-top: 2px; }
.w76 { width: 76px; }
.w316 { width: 316px; padding: 0 12px 2px !important; }
.w133 { width: 133px; padding: 0 14px 2px !important; }
.w78 { width: 78px; }
.toggle { position: relative; width: 36px; height: 23px; border-radius: 12px; background: #18bc9c; margin-top: -6px; }
.toggle::after { content: ""; position: absolute; right: 2px; top: 2px; width: 19px; height: 19px; border-radius: 50%; background: #fff; }
.link-ops { display: flex; gap: 4px; margin-top: -3px; }
.link-btn { width: 35px; height: 34px; color: #fff; border-radius: 3px; display: flex; align-items: center; justify-content: center; }
.link-btn svg { width: 13px; height: 13px; }
.link-btn.is-red { background: #f5503f; }
.link-btn.is-dark { background: #444c69; width: 38px; }
.link-btn.is-dark svg { width: 17px; height: 17px; }
.add-link { width: 66px; height: 34px; margin: 9px 0 0 7px; font-size: 14.7px; gap: 2px; display: flex; }
.add-link svg { width: 12px; height: 12px; }
.row-state { margin-top: 64px; }
.scrollbar { width: 18px; flex-shrink: 0; background: #f1f1f1; display: flex; flex-direction: column; align-items: center; padding: 9px 0 9px; box-sizing: border-box; }
.thumb { width: 17px; height: 575px; background: #c1c1c1; margin: 7px 0 auto; }

.modal-foot { height: 61px; flex-shrink: 0; background: #eeeff0; display: flex; gap: 7px; padding: 11px 0 0 200px; box-sizing: border-box; }
.foot-btn { width: 54px; height: 37px; border-radius: 3px; background: #f4f4f4; border: 1px solid #e8e8e8; color: #333; font-size: 14.7px; padding-bottom: 3px; }
.foot-btn.is-ok { width: 59px; background: #444c69; color: #fff; border-color: #444c69; }

/* Page trace badges */
.trace { position: absolute; display: flex; height: 34px; align-items: stretch; overflow: hidden; }
.trace svg { width: 34px; height: 34px; }
.trace span { width: 87px; background: #222; color: #fff; line-height: 34px; text-align: center; font-size: 15.6px; }
.in-modal { left: 983px; top: 693px; }
.in-page { right: 0; bottom: 0; height: 33px; }

.side-widget {
  position: absolute; right: 0; top: 616px; width: 13px; height: 74px; box-sizing: border-box;
  background: #3c4650; border-radius: 4px 0 0 4px; padding: 10px 2px 8px 5px;
  display: flex; flex-direction: column; justify-content: space-between;
}
.side-widget i { height: 2px; background: #5c6670; }
.side-widget .lit { background: #7fd1ae; }
</style>
